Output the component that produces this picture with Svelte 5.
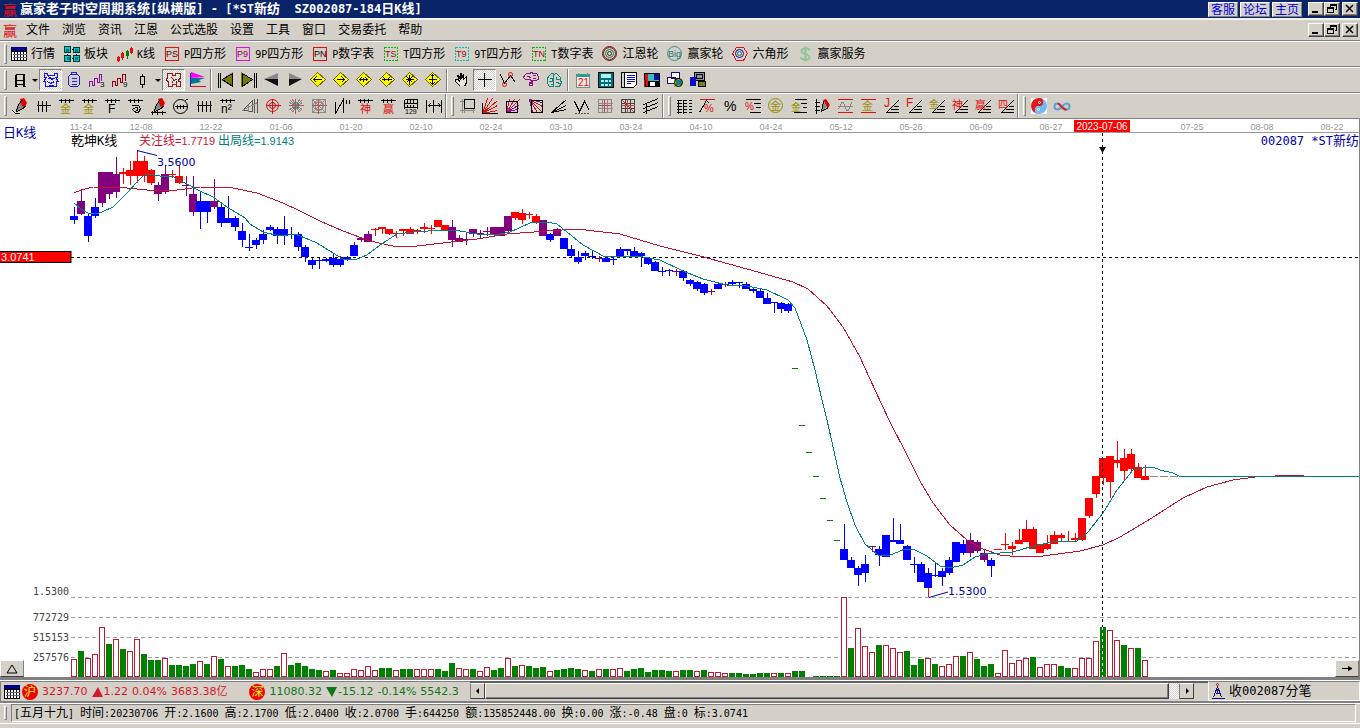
<script lang="ts">
	type Part = [string, string, string, number?, number?, number?];

	const menus = ['文件', '浏览', '资讯', '江恩', '公式选股', '设置', '工具', '窗口', '交易委托', '帮助'];

	const views = [
		['grid', '行情'], ['blocks', '板块'], ['kline', 'K线'], ['PS', 'P四方形'], ['P9', '9P四方形'],
		['PN', 'P数字表'], ['TS', 'T四方形'], ['T9', '9T四方形'], ['TN', 'T数字表'], ['wheel', '江恩轮'],
		['big', '赢家轮'], ['hex', '六角形'], ['dollar', '赢家服务']
	];

	const tools = [
		'day', 'v', '!cloud', 'clip', 'wave3', 'wave9', 'candle', 'v', '!puzzle', 'flag', '|',
		'first', 'last', 'prev', 'next', 'dLeft', 'dRight', 'dWide', 'dIn', 'dStar', 'dUp', '|',
		'hand', '!cross', 'zig', 'brain1', 'brain2', '|',
		'cal', 'calc', 'note', 'disk', 'net', 'pc'
	];

	const bands = [
		['pen', 'ticks3', 'gold', 'gold', 'combF', 'spiral', 'penRule', 'circRule', 'ticks4', 'n2', 'tri', 'target', 'burst', 'web', 'quote', 'shen', 'ying', 'ruler', 'span'],
		['box', 'fan', 'fanBox', 'fanBox2', 'rays', 'vee', 'mesh', 'mesh2', 'para'],
		['levels', 'pctTop', 'pct', 'pctBars', 'goldRing', 'goldBars', 'penBar', 'sine', 'goldLine', 'rJ', 'rF', 'rGold', 'rShen', 'rYing', 'rSi'],
		['taiji', 'inf']
	];

	const K = '#000', R = '#e01010', D = '#8a8a8a', O = '#98900c';
	const comb: Part = ['s', K, 'M0 2h15M3 0v4M7 0v4M11 0v4'];
	const slope: Part = ['s', K, 'M3 14L15 2M2 14h13M7 11h8M10 8h5'];
	const dia: Part = ['f', '#ffff00', 'M7 0L15 7L8 15L0 8Z'];
	const diaEdge: Part = ['s', '#6b6400', 'M7 0L15 7L7 14L0 7Z'];
	const penBody: Part[] = [
		['f', '#888', 'M8 3L13 7L9 12L4 13L5 9Z'],
		['f', '#e00000', 'M8 1L12 0L15 5L13 9L10 8Z'],
		['s', K, 'M9 2L5 8L4 13L9 11L14 7']
	];

	const icons: Record<string, Part[]> = {
		grid: [['f', '#fff', 'M0 1h16v13H0Z'], ['f', '#000090', 'M0 1h16v4H0Z'], ['s', K, 'M0 1v13h15v-13M0 5h15M3 5v9M6 5v9M9 5v9M12 5v9'], ['s', '#667', 'M1 8h14M1 11h14']],
		blocks: [['f', '#00c8c8', 'M0 0h7v7H0ZM9 1h6v6H9ZM0 9h7v7H0ZM9 9h7v7H9Z'], ['s', '#003838', 'M0 0h6v6H0ZM9 1h6v5H9ZM0 9h6v6H0ZM9 9h6v6H9Z'], ['f', '#007878', 'M2 3h3v3H2ZM11 3h3v3h-3ZM3 11h3v3H3ZM11 11h3v3h-3Z'], ['s', K, 'M7 3h2M3 7v2M12 7v2M7 12h2']],
		kline: [['s', R, 'M1 9v6M0 11h2v3H0ZM5 5v8M4 7h2v4H4ZM14 0v7M13 2h2v4h-2Z'], ['s', '#008000', 'M10 3v9M9 5h2v4H9Z']],
		PS: [['s', R, 'M1 1h13v13H1Z'], ['t', '#600', 'PS', 2, 11, 9]],
		P9: [['s', '#e010e0', 'M1 1h13v13H1Z'], ['t', '#a00060', 'P9', 2, 11, 9]],
		PN: [['s', R, 'M1 1h13v13H1Z'], ['t', '#300', 'PN', 2, 11, 9]],
		TS: [['d', '#00c000', 'M1 1h13v13H1Z'], ['t', '#901010', 'TS', 2, 11, 9]],
		T9: [['d', '#00c0c0', 'M1 1h13v13H1Z'], ['t', '#901010', 'T9', 2, 11, 9]],
		TN: [['d', '#00c000', 'M1 1h13v13H1Z'], ['t', '#901010', 'TN', 2, 11, 9]],
		wheel: [['c', '#701010', '', 7, 7, 7], ['c', '#802020', '', 7, 7, 6], ['c', '#208040', '', 7, 7, 4], ['c', '#333', '', 7, 7, 2]],
		big: [['c', '#4a8f8a', '', 7, 7, 7], ['t', '#207878', 'Big', 1, 11, 9]],
		hex: [['s', R, 'M4 1h7l4 6l-4 7H4L0 7Z'], ['c', '#1010c0', '', 7, 7, 4], ['c', '#208040', '', 7, 7, 2]],
		dollar: [['b', '#8fc49a', 'M12 4C11 1 4 1 4 5C4 8 12 7 12 11C12 14 5 14 3 11M8 0v15']],
		day: [['s', K, 'M3 2h9v12M4 2v12M3 14V2M3 8h9M11 2v12M3 12h9M2 14h3M10 14h3']],
		cloud: [['s', '#1010ff', 'M1 1h3v2h7V1h3v4h-2l3 4h-2v5H2V9H0l3-4H1ZM4 6h7M5 4l5 4M4 9l3 2 4-2M5 13h5']],
		clip: [['s', '#2020e0', 'M4 2h7l2 2v8l-2 2H4l-2-2V4ZM5 2V0h5v2M5 6h5M5 9h5M5 12h5']],
		wave3: [['s', '#8a10a0', 'M0 14V9h3v4h2V6h3v4h2V2h2v6'], ['t', K, '3', 11, 15, 8]],
		wave9: [['s', '#900010', 'M0 14V9h3v4h2V6h3v4h2V2h3v6'], ['t', K, '9', 11, 15, 8]],
		candle: [['s', K, 'M7 1v3M7 12v3M5 4h4v8H5Z']],
		puzzle: [['s', '#a01010', 'M1 1h5v2h3V1h5v5l-2 1v2h2v5h-4v-2H6v2H2V9l-2-1V6h1ZM5 5l3 3l3-2M5 11l2-3M10 8v3']],
		flag: [['f', '#ff00ff', 'M2 0L16 5L2 6Z'], ['f', '#007890', 'M2 6L16 6L10 8L12 10L2 12Z'], ['s', '#2020a0', 'M1 0v14'], ['s', R, 'M1 14h15']],
		first: [['f', '#777a00', 'M15 0v15L3 8Z'], ['s', K, 'M0 0v15M2 0v15M14 1v13L4 7Z']],
		last: [['f', '#777a00', 'M0 0v15L12 8Z'], ['s', K, 'M13 0v15M15 0v15M1 1v13L11 7Z']],
		prev: [['f', '#111', 'M0 7h14v7Z'], ['f', '#888', 'M0 7L14 1V7Z']],
		next: [['f', '#111', 'M15 7H2v7Z'], ['f', '#888', 'M15 7L2 1V7Z']],
		dLeft: [dia, diaEdge, ['s', K, 'M3 7h8M6 4L3 7l3 3']],
		dRight: [dia, diaEdge, ['s', K, 'M3 7h8M8 4l3 3l-3 3']],
		dWide: [dia, diaEdge, ['s', K, 'M3 7h8M5 5L3 7l2 2M9 5l2 2l-2 2M7 5v4']],
		dIn: [dia, diaEdge, ['s', K, 'M2 7h10M4 5l2 2l-2 2M10 5L8 7l2 2']],
		dStar: [dia, diaEdge, ['s', K, 'M7 2v10M3 7h8M4 4l6 6M10 4l-6 6']],
		dUp: [dia, diaEdge, ['s', K, 'M7 2v10M3 7h8M5 4l2-2l2 2M5 10l2 2l2-2']],
		hand: [['f', '#e8e6e0', 'M5 5h7l2 2l-3 7H6L2 9Z'], ['s', K, 'M6 14L1 9V7h2l2 2L3 3h1l2 4V1h1v5l2-4v5l3-3v6l-2 4']],
		cross: [['s', K, 'M7 0v14M0 7h14']],
		zig: [['s', K, 'M0 2L4 11L10 3L15 10'], ['c', R, '', 4, 12, 2], ['c', R, '', 10, 2, 2]],
		brain1: [['s', '#90108a', 'M1 3l2-2h3l2-1l2 1h3l2 3v3l-3 1h-3v5H6v-3h2V8L6 7H2L0 5ZM3 4h3l1 2M9 3h3M9 6h3M6 11h3']],
		brain2: [['s', '#108a80', 'M2 4l3-3h2v13H3l-2-3V6ZM7 2l3-1l4 4v3l1 2l-2 4H8M3 6h3v3H2M10 4v3h3M9 10h3l1 2M4 12h2']],
		cal: [['f', '#f4e8e4', 'M1 4h14v12H1Z'], ['f', '#20a090', 'M1 2h14v3H1Z'], ['s', '#888', 'M1 3v12h13V3M3 0v3M12 0v3'], ['t', R, '21', 3, 14, 10]],
		calc: [['f', '#007080', 'M0 0h16v16H0Z'], ['s', K, 'M0 0h15v15H0Z'], ['f', '#b0f0f0', 'M3 2h10v4H3ZM3 8h3v2H3ZM7 8h3v2H7ZM11 8h2v2h-2ZM3 12h3v2H3ZM7 12h3v2H7ZM11 12h2v2h-2Z']],
		note: [['f', '#fff', 'M3 1h12v14H3Z'], ['s', K, 'M0 0h15v12l-3 3H0ZM3 0v15'], ['s', '#1010c0', 'M5 3h8M5 5h8M5 7h8M5 9h8M5 11h4']],
		disk: [['f', R, 'M0 1h4v14H0Z'], ['f', '#30c0c0', 'M4 1h12v8H4Z'], ['f', '#1010a0', 'M10 2h6v6h-6Z'], ['f', K, 'M4 9h11v6H4Z'], ['f', '#fff', 'M6 10h5v4H6Z'], ['s', K, 'M0 1h15v13H1Z']],
		net: [['f', '#fff', 'M4 0h9v7H4ZM0 5h8v7H0Z'], ['s', '#101080', 'M4 0h8v6H4ZM0 5h8v6H0Z'], ['f', '#c0b020', 'M7 7h7v8H7Z'], ['f', '#108080', 'M9 8h6v5H9Z'], ['c', K, '', 11, 10, 4]],
		pc: [['f', '#9090b0', 'M4 0h10v9H4Z'], ['s', K, 'M4 0h10v8H4ZM6 2h6v4H6Z'], ['f', '#1010c0', 'M0 5h6v9H0Z'], ['f', '#808020', 'M8 9h7v5H8Z'], ['s', K, 'M8 9h7v5H8Z']],
		pen: [...penBody, ['s', K, 'M0 12l3 3h4']],
		ticks3: [['s', K, 'M1 7h14M3 2v11M7 2v11M11 2v11']],
		gold: [comb, ['t', O, '金', 2, 15, 11]],
		combF: [comb, ['t', K, 'F', 4, 15, 12]],
		spiral: [comb, ['s', K, 'M4 7h7l2 3l-2 4H7M8 9l-3 2l2 2l3-1V9Z']],
		penRule: [...penBody, ['s', K, 'M0 14h15M2 12v4M7 12v4M12 12v4']],
		circRule: [['c', K, '', 7, 8, 7], ['s', K, 'M1 8h13M4 6v4M7 6v4M10 6v4M12 2l3-2']],
		ticks4: [['s', K, 'M0 7h15M2 2v11M6 2v11M10 2v11M14 2v11']],
		n2: [comb, ['t', K, 'n²', 2, 15, 12]],
		tri: [['s', '#555', 'M0 12L10 2V13ZM12 0v14M15 0v14'], ['s', D, 'M6 6v7M0 12l15-8']],
		target: [['c', R, '', 7, 7, 6], ['c', '#802020', '', 7, 7, 3], ['s', R, 'M7 0v15M0 7h15']],
		burst: [['s', D, 'M2 2l11 11M13 2L2 13M4 1l7 13M1 4l13 7M11 1L4 14M14 4L1 11'], ['s', '#c05050', 'M7 0v15M0 7h15'], ['c', '#308070', '', 7, 7, 3]],
		web: [['s', D, 'M1 1h13v13H1ZM4 4h7v7H4ZM1 1l13 13M14 1L1 14'], ['s', '#c05050', 'M7 0v15M0 7h15'], ['c', D, '', 7, 7, 5]],
		quote: [['s', K, 'M1 3v12L9 1v13M12 1v4M15 1v4']],
		shen: [comb, ['t', R, '神', 3, 15, 11]],
		ying: [comb, ['t', R, '赢', 3, 15, 11]],
		ruler: [['s', K, 'M1 1v9M1 1h13v9M1 5h13M4 1v3M7 1v3M10 1v3M1 9h13M4 6v3M7 6v3M10 6v3'], ['t', K, '129', 2, 16, 7]],
		span: [['s', K, 'M0 1v13M7 1v13M15 1v13M2 7h12M4 5L2 7l2 2M12 5l2 2l-2 2']],
		box: [['s', D, 'M3 0v14M0 12h15M0 3h4M5 10v4M14 10v4'], ['s', K, 'M5 1h10v9H5Z']],
		fan: [['s', R, 'M0 15L15 2M0 15L10 0M0 15L5 0M0 15L15 7M0 15L15 12'], ['s', K, 'M0 4v11h15']],
		fanBox: [['s', '#c02050', 'M1 14L14 1M1 14L9 1M1 14L4 1'], ['s', '#8a10a0', 'M1 14L14 6M1 14L14 10'], ['s', K, 'M1 3h11v11H1Z']],
		fanBox2: [['s', '#c02030', 'M1 1L14 14M1 1L9 14M1 1L14 8'], ['s', '#6020a0', 'M1 1L4 14M1 1L14 4'], ['s', K, 'M3 2h11v12H3Z']],
		rays: [['s', K, 'M0 14L15 1M0 14L15 7M0 14L15 11M0 14l7-6']],
		vee: [['s', K, 'M0 3L5 13L10 3L15 12'], ['d', '#555', 'M0 15h15']],
		mesh: [['s', D, 'M1 1h13v13H1ZM1 5h14M1 10h14M5 1v13M10 1v13'], ['s', '#c04848', 'M1 7h13M7 1v13']],
		mesh2: [['s', '#444', 'M1 1h13v13H1ZM1 5h13M1 10h13M5 1v13M10 1v13'], ['s', '#c04848', 'M1 1l13 13M7 1v13M1 7h13']],
		para: [['s', K, 'M0 6L15 0M0 10L15 4M0 14L15 8M3 5v10']],
		levels: [['s', K, 'M2 1v14M7 1v14M0 2h5M0 5h5M0 8h5M0 11h5M0 14h5M7 2h3M7 5h3M7 8h3M7 11h3M7 14h3M12 2h3M12 5h3M12 8h3M12 11h3M12 14h3']],
		pctTop: [['s', R, 'M0 1h15'], ['s', K, 'M0 14L7 2l3 3'], ['t', R, '%', 5, 14, 11]],
		pct: [['t', K, '%', 2, 13, 14]],
		pctBars: [['s', K, 'M0 1h15M8 5h7M10 9h5M4 14h11'], ['t', R, '%', 0, 12, 10]],
		goldRing: [['c', O, '', 7, 7, 7], ['t', O, '金', 2, 12, 11]],
		goldBars: [['s', K, 'M3 1h12M9 5h6M11 9h4M2 14h13'], ['t', O, '金', 0, 13, 10]],
		penBar: [['s', K, 'M2 0v15M0 4h5M0 8h5M0 12h5'], ['f', '#888', 'M9 4l5 4l-7 6Z'], ['f', '#e00000', 'M9 2l3-1l4 6l-2 3Z'], ['s', K, 'M9 3L7 13l7-4']],
		sine: [['s', R, 'M0 1h15M0 14h15'], ['s', D, 'M0 8h15M1 11L4 4h2l3 8h2l3-8']],
		goldLine: [['s', R, 'M0 1h15M0 14h15'], ['t', O, '金', 2, 12, 11]],
		rJ: [slope, ['t', R, 'J', 1, 9, 12]],
		rF: [slope, ['t', R, 'F', 0, 9, 12]],
		rGold: [slope, ['t', O, '金', 0, 10, 10]],
		rShen: [slope, ['t', R, '神', 0, 11, 11]],
		rYing: [slope, ['t', R, '赢', 0, 11, 11]],
		rSi: [slope, ['t', R, '四', 0, 10, 10]],
		taiji: [['f', '#fff', 'M0 0h16v16H0Z'], ['f', '#70b8f8', 'M8 0A8 8 0 0 1 8 16Z'], ['f', '#e01818', 'M8 0A8 8 0 0 0 8 16A4 4 0 0 1 8 8A4 4 0 0 0 8 0Z'], ['f', '#e01818', 'M8 0a4 4 0 0 1 0 8Z'], ['f', '#70b8f8', 'M8 8a4 4 0 0 0 0 8Z'], ['c', '#fff', '', 8, 4, 1], ['c', '#fff', '', 7, 11, 1]],
		inf: [['b', '#60a0d0', 'M7 8C5 4 0 4 0 8C0 12 5 12 7 8'], ['b', '#60a0d0', 'M8 8C10 12 15 12 15 8C15 4 10 4 8 8'], ['b', '#d02020', 'M3 5C6 5 8 12 12 11']],
		tower: [['s', '#101080', 'M7 3L3 14M7 3L11 14M5 10h5M5 7h4M1 15h13M7 5v5'], ['c', R, '', 7, 1, 1]]
	};

	// dates under the toolbar, by the x of their middle
	const dates: [string, number][] = [
		['11-24', 81], ['12-08', 141], ['12-22', 211], ['01-06', 281], ['01-20', 351], ['02-10', 421],
		['02-24', 491], ['03-10', 561], ['03-24', 631], ['04-10', 701], ['04-24', 771], ['05-12', 841],
		['05-26', 911], ['06-09', 981], ['06-27', 1051], ['07-25', 1192], ['08-08', 1262], ['08-22', 1332]
	];

	const colours: Record<string, string> = { b: '#0000ff', r: '#ff0000', p: '#800080', g: '#008000' };

	// colour, high, body top, body bottom, low
	const candles = `b 207 216 220 224,p 190 201 214 215,b 213 216 236 242,b 198 207 216 218,p 172 172 203 207,p 172 172 194 199,p 157 174 192 198,r 168 172 174 184,r 161 170 176 185,r 150 161 176 183
r 156 161 176 182,r 169 170 183 185,p 182 185 194 201,p 165 174 192 194,r 170 174 175 178,r 165 176 183 184,p 176 185 186 196,p 176 194 212 216,b 191 201 212 229,b 201 201 212 223
p 179 201 207 209,b 203 207 223 227,b 196 218 223 223,b 216 218 227 231,b 223 231 240 247,b 234 247 248 251,b 238 240 245 249,b 230 234 240 244,b 225 227 230 231,b 227 229 236 244
b 216 229 236 245,b 227 234 235 239,b 232 234 247 251,b 245 247 257 262,b 258 260 265 269,b 258 260 261 269,b 258 259 261 262,b 253 258 265 267,b 256 259 265 267,b 256 257 259 261
b 242 245 256 256,p 237 238 240 242,p 231 234 242 242,r 228 229 230 236,r 227 227 229 234,r 229 229 234 235,r 231 233 234 238,r 229 229 231 236,r 227 229 234 234,r 229 230 231 234
r 223 227 229 233,r 225 228 229 234,r 220 220 227 227,r 225 225 230 230,p 220 227 240 247,p 235 238 242 242,p 233 239 240 245,p 229 229 234 237,p 230 233 234 239,p 227 231 232 236
p 227 227 234 236,p 227 227 236 236,p 216 216 231 232,r 212 212 218 220,r 209 213 220 224,r 212 214 215 219,r 214 216 223 224,p 220 220 236 236,b 233 234 240 242,p 228 229 236 236
b 238 238 249 249,b 245 249 256 257,b 251 257 262 264,b 251 253 256 260,b 250 256 257 259,p 256 258 259 262,b 257 258 262 262,b 257 259 260 265,b 247 249 256 256,b 249 249 251 255
b 247 251 256 257,b 252 253 256 267,b 257 258 264 265,b 261 262 271 271,b 267 271 272 276,b 269 270 271 276,p 269 271 272 276,b 270 271 278 281,b 279 280 284 286,b 281 282 289 291
b 283 284 293 295,p 289 291 292 295,b 283 284 289 289,p 282 284 285 287,b 280 282 284 285,b 282 282 283 288,b 282 284 289 289,b 288 289 291 293,b 289 291 298 298,b 293 298 304 304
b 302 302 303 313,b 302 303 309 313,b 303 304 311 313,g 368 368 369 369,g 425 425 426 426,g 452 452 453 453,g 476 476 477 477,g 498 498 499 499,g 520 520 521 521,g 540 540 541 541
b 524 549 560 560,b 557 560 568 568,b 566 568 575 586,b 555 564 573 582,p 546 546 547 552,b 546 549 555 566,b 535 535 557 557,b 518 540 542 542,b 524 540 544 544,b 545 546 560 560
b 557 564 565 573,b 562 564 582 582,b 568 573 588 597,b 563 575 576 577,b 568 571 577 586,b 557 560 573 575,b 542 542 562 562,b 540 544 553 555,p 533 540 553 557,p 540 542 551 553
p 549 553 560 562,b 558 560 566 577,r 549 549 550 550,r 533 544 545 550,r 542 546 549 555,r 529 540 544 544,r 520 529 542 542,r 527 529 549 549,r 544 544 553 553,r 535 544 549 550
r 531 535 544 544,r 533 535 538 542,r 531 541 542 542,r 533 538 540 542,r 518 518 540 541,r 498 498 516 518,r 476 476 494 498,r 458 458 478 485,r 456 456 482 498,r 441 460 463 468
r 449 458 471 480,r 449 454 469 473,r 463 467 478 478,r 465 476 480 480`
		.split(/[,\n]/)
		.map((row, i) => {
			const [c, ...v] = row.trim().split(' ');
			const [high, top, bottom, low] = v.map(Number);
			return { x: 74 + 7 * i, fill: colours[c], high, top, bottom, low };
		});

	// r is a hollow rising bar, g a filled falling one; the number is its height
	const volumes = `r18 g26 r19 r23 r50 g33 r38 g28 r26 r38 g23 g17 g17 r19 g12 g12 g11 g13 r16 g13
r21 g18 r11 g11 g12 g8 r5 r8 r8 g11 r24 g12 g14 g11 g8 g7 r6 g7 r4 r4
r8 r7 r11 r7 g9 g9 r7 g8 g8 r8 r8 r8 g8 g6 g14 r9 r8 g8 r6 r10
g7 g9 r19 g11 r12 g11 g9 g10 r6 g7 g8 g9 g8 r7 g6 r8 g8 r8 r9 g6
g8 g9 g5 g7 g7 g6 r6 g7 g7 r6 g7 r5 r5 r4 g4 g4 g3 g3 g4 g4
r4 g4 r4 g6 g6 g0 g1 g1 g1 g1 r80 g29 r49 r31 r25 g32 r32 r29 r25 g26
g12 g18 r19 g13 r11 r13 r21 g21 r25 g18 g11 g13 r4 r27 r14 r17 r19 g20 r10 r13
r13 g11 g9 r9 r19 r19 r36 g50 r47 r37 g32 r29 g29 r17`
		.split(/\s+/)
		.map((v, i) => ({ x: 71 + 7 * i, up: v[0] === 'r', h: Number(v.slice(1)) }));

	const shortLine = '74,203 81,209 88,213 97,214 104,211 113,207 127,193 137,182 144,175 148,174 160,176 172,176 177,179 187,184 200,191 213,197 227,207 245,218 250,224 263,232 280,236 295,234 310,240 317,243 333,253 343,259 355,260 367,255 380,245 397,234 413,232 443,230 460,231 477,234 500,234 510,232 530,223 547,222 557,224 567,232 583,245 605,257 620,256 643,257 660,260 683,271 703,279 727,285 747,286 767,290 788,300 795,308 807,340 815,370 822,400 827,420 840,478 847,502 855,525 865,544 878,555 888,556 905,549 913,549 927,556 940,566 950,568 963,565 975,557 987,554 1013,552 1030,547 1057,541 1077,541 1088,532 1103,513 1117,490 1133,470 1143,468 1153,467 1160,470 1173,473 1179,476';
	const longLine = '74,193 81,190 93,187 127,188 147,190 177,190 200,187 233,188 257,193 283,203 300,211 320,221 343,231 370,241 393,246 417,246 443,243 477,239 507,234 547,231 577,229 603,232 620,234 660,246 700,256 747,269 793,282 808,289 827,306 843,327 860,357 875,390 889,420 907,455 920,481 933,503 950,525 967,540 983,549 1000,555 1020,557 1043,556 1080,551 1103,545 1120,537 1147,521 1183,498 1207,487 1233,480 1255,477 1275,476 1275,475 1303,475 1303,476';

	const levels: [string, number][] = [['1.5300', 597], ['772729', 617], ['515153', 637], ['257576', 657]];

	const quote = ['[五月十九]', '时间:20230706', '开:2.1600', '高:2.1700', '低:2.0400', '收:2.0700', '手:644250', '额:135852448.00', '换:0.00', '涨:-0.48', '盘:0', '标:3.0741'];

	// Chinese and Latin runs are set in different faces
	function runs(text: string) {
		return text.match(/[\x20-\x7e]+|[^\x20-\x7e]+/g) ?? [];
	}
	const isLatin = (run: string) => run.charCodeAt(0) < 127;
</script>

{#snippet mixed(text: string)}{#each runs(text) as run}<span class:lat={isLatin(run)}>{run}</span>{/each}{/snippet}

{#snippet icon(name: string)}
	<svg class="icon" width="16" height="16" aria-hidden="true">
		{#each icons[name] as [kind, colour, d, x, y, size]}
			{#if kind === 't'}
				<text {x} {y} fill={colour} font-size={size}>{d}</text>
			{:else if kind === 'c'}
				<circle cx={x! + 0.5} cy={y! + 0.5} r={size} fill="none" stroke={colour} />
			{:else if kind === 'f'}
				<path {d} fill={colour} />
			{:else}
				<path
					{d}
					transform="translate(.5 .5)"
					fill="none"
					stroke={colour}
					stroke-width={kind === 'b' ? 2 : 1}
					stroke-dasharray={kind === 'd' ? '2 1' : undefined}
					shape-rendering={kind === 'b' ? 'auto' : 'crispEdges'}
				/>
			{/if}
		{/each}
	</svg>
{/snippet}

{#snippet windowButtons()}
	<div class="win">
		<button aria-label="最小化"><svg width="12" height="10"><path d="M2 7h6v2H2z" /></svg></button>
		<button aria-label="还原"><svg width="12" height="10"><path d="M4 0h7v6H9V5h1V2H5v1H4zM1 3h7v6H1zM2 5v3h5V5z" fill-rule="evenodd" /></svg></button>
		<button class="close" aria-label="关闭"><svg width="12" height="10"><path d="M2 1l7 7M9 1L2 8" stroke="#000" stroke-width="1.500" /></svg></button>
	</div>
{/snippet}

<div class="app">
	<header class="title">
		<span class="logo">赢</span>
		<h1>{@render mixed('赢家老子时空周期系统[纵横版] - [*ST新纺  SZ002087-184日K线]')}</h1>
		<nav>
			<a href="#service">客服</a>
			<a href="#forum">论坛</a>
			<a href="#home">主页</a>
		</nav>
		{@render windowButtons()}
	</header>

	<div class="menubar">
		<span class="logo">赢</span>
		{#each menus as menu}
			<button>{menu}</button>
		{/each}
		{@render windowButtons()}
	</div>

	<div class="toolbar views">
		<i class="grip"></i>
		{#each views as [name, label]}
			<button>{@render icon(name)}<span>{@render mixed(label)}</span></button>
		{/each}
	</div>

	<div class="toolbar">
		<i class="grip"></i>
		{#each tools as tool}
			{#if tool === '|'}
				<i class="sep"></i>
			{:else if tool === 'v'}
				<button class="drop" aria-label="展开"></button>
			{:else}
				<button class="tool" class:pressed={tool[0] === '!'} aria-label={tool.replace('!', '')}>
					{@render icon(tool.replace('!', ''))}
				</button>
			{/if}
		{/each}
	</div>

	<div class="toolbar">
		{#each bands as band}
			<div class="band">
				<i class="grip"></i>
				{#each band as tool}
					<button class="tool" aria-label={tool}>{@render icon(tool)}</button>
				{/each}
			</div>
		{/each}
	</div>

	<main class="chart">
		<svg class="plot" width="100%" height="558">
			<!-- y counts from the top of the window -->
			<g transform="translate(0 -119)">
				<g class="dates">
					{#each dates as [date, x]}
						<text {x} y="130">{date}</text>
					{/each}
				</g>
				<path class="axis" d="M71 132.500H4000" />

				{#each levels as [label, y]}
					<text class="level" x="69" y={y - 2 + (y > 600 ? 6 : 0)}>{label}</text>
					<path class="guide" d="M71 {y}.5H4000" />
				{/each}

				<g shape-rendering="crispEdges">
					{#each volumes as bar}
						{#if bar.up}
							<rect x={bar.x + 0.5} y={677.5 - bar.h} width="5" height={bar.h - 1} fill="#fff" stroke="#c01830" />
						{:else}
							<rect x={bar.x} y={677 - bar.h} width="6" height={bar.h} fill="#008000" />
						{/if}
					{/each}
					<path class="cross" d="M71 257.500H4000" />
					{#each candles as c}
						{#if c.high < c.low}
							<rect x={c.x} y={c.high} width="1" height={c.low - c.high} fill={c.fill} />
						{/if}
						<rect x={c.x - (c.fill === '#008000' ? 3 : 4)} y={c.top} width={c.fill === '#008000' ? 6 : 8} height={c.bottom - c.top} fill={c.fill} />
					{/each}
					<path d="M928.500 588V597" stroke="#ff0000" />
					<polyline points={longLine} fill="none" stroke="#c8102c" />
					<polyline points={shortLine} fill="none" stroke="#008080" />
					<path d="M1150 476.500H1179" stroke="#a08080" stroke-dasharray="8 2" />
					<path d="M1179 476.500H4000" stroke="#008080" />
					<path d="M1275 475.500H1303" stroke="#c8102c" />
					<path class="cross" d="M1102.500 133V627" />
					<path class="cross light" d="M1102.500 627V677" />
				</g>
				<path d="M1099 147h7l-3 5h-1z" />

				<rect x="1074" y="120" width="56" height="12" fill="#ff0000" />
				<text class="date-now" x="1102" y="130">2023-07-06</text>
				<rect x="-1" y="251.500" width="72" height="11" fill="#ff0000" stroke="#000" />
				<text class="price-now" x="1" y="261">3.0741</text>

				<text class="name blue" x="3" y="137">日<tspan class="svg-lat">K</tspan>线</text>
				<text class="name" x="71" y="145">乾坤<tspan class="svg-lat">K</tspan>线</text>
				<text class="legend" x="139" y="145" fill="#d01030">关注线<tspan>=1.7719</tspan></text>
				<text class="legend" x="218" y="145" fill="#008080">出局线<tspan>=1.9143</tspan></text>
				<path d="M137 150.500L157 155.500M929 597.500L948 592" stroke="#0000a8" fill="none" />
				<text class="mark" x="157" y="166">3.5600</text>
				<text class="mark" x="948" y="595">1.5300</text>
			</g>
		</svg>
		<div class="stock">{@render mixed('002087 *ST新纺')}</div>
		<button class="corner left" aria-label="展开指标"><svg width="12" height="10"><path d="M6 1L11 9H1Z" fill="none" stroke="#000" /></svg></button>
		<button class="corner right" aria-label="右移"><svg width="12" height="10"><path d="M1 4h10v1H1zM7 2l4 2v1l-4 2z" /></svg></button>
	</main>

	<div class="market">
		<div class="indexes">
			{@render icon('grid')}
			<b class="badge">沪</b>
			<div class="index up"><span>3237.70</span><span class="change"><svg width="11" height="10"><path d="M6 0L11 10H0z" /></svg>1.22</span><span>0.04%</span><span>3683.38亿</span></div>
			<b class="badge">深</b>
			<div class="index down"><span>11080.32</span><span class="change"><svg width="11" height="10"><path d="M0 0h11L6 10z" /></svg>-15.12</span><span>-0.14%</span><span>5542.3</span></div>
		</div>
		<div class="scroll">
			<button aria-label="向左"><svg width="8" height="8"><path d="M5 1v6L2 4z" /></svg></button>
			<div class="thumb"></div>
			<div class="track"></div>
			<button aria-label="向右"><svg width="8" height="8"><path d="M3 1v6l3-3z" /></svg></button>
		</div>
		<div class="feed">{@render icon('tower')}<span>{@render mixed('收002087分笔')}</span></div>
	</div>

	<footer>
		<i class="grip"></i>
		<div class="quote">
			{#each quote as field}
				<span>{@render mixed(field)}</span>
			{/each}
		</div>
	</footer>
</div>

<style>
	:global(body) {
		margin: 0;
		background: #d4d0c8;
	}
	.app {
		font-family: "Liberation Sans", "Noto Sans CJK SC", sans-serif;
		font-size: 12px;
		line-height: 16px;
		color: #000;
		background: #d4d0c8;
		overflow: hidden;
	}
	button {
		font: inherit;
		color: inherit;
		border: 0;
		padding: 0;
		background: none;
		display: flex;
		align-items: center;
		justify-content: center;
		white-space: nowrap;
	}
	svg {
		display: block;
		flex: none;
	}
	.icon {
		overflow: visible;
	}
	.lat {
		font-family: "DejaVu Sans Mono", monospace;
		font-size: 10px;
		white-space: pre;
	}

	.title {
		display: flex;
		align-items: center;
		height: 18px;
		background: #0a246a;
		color: #fff;
	}
	.logo {
		width: 14px;
		margin: 0 3px;
		font-family: "Noto Sans CJK SC", sans-serif;
		font-size: 14px;
		color: #e01020;
	}
	h1 {
		margin: 0;
		font-size: 13px;
		line-height: 18px;
		white-space: nowrap;
	}
	h1 .lat,
	.stock .lat,
	.feed .lat {
		font-size: 12px;
	}
	nav {
		display: flex;
		gap: 2px;
		margin-left: auto;
		margin-right: 6px;
	}
	nav a {
		box-sizing: border-box;
		width: 30px;
		height: 15px;
		line-height: 14px;
		font-size: 12px;
		text-align: center;
		text-decoration: none;
		color: #0000e0;
		background: #d4d0c8;
		border: 1px solid;
		border-color: #fff #808080 #808080 #fff;
	}
	.win {
		display: flex;
		margin-right: 2px;
	}
	.win button {
		box-sizing: border-box;
		width: 16px;
		height: 14px;
		background: #d4d0c8;
		border: 1px solid;
		border-color: #fff #404040 #404040 #fff;
		box-shadow: inset -1px -1px #808080;
	}
	.win .close {
		margin-left: 2px;
	}

	.menubar {
		box-sizing: border-box;
		display: flex;
		align-items: center;
		height: 23px;
		border-top: 2px solid #f4f2ee;
		border-bottom: 1px solid #808080;
	}
	.menubar button {
		margin-right: 12px;
	}
	.menubar .logo {
		margin-right: 9px;
	}
	.menubar .win {
		margin-left: auto;
	}
	.menubar .win button {
		margin-right: 0;
	}

	.toolbar {
		box-sizing: border-box;
		display: flex;
		align-items: center;
		height: 26px;
		padding-left: 4px;
		border-top: 1px solid #fff;
		border-bottom: 1px solid #808080;
	}
	.toolbar:has(.band) {
		padding-left: 0;
	}
	.grip {
		box-sizing: border-box;
		flex: none;
		width: 3px;
		height: 20px;
		margin-right: 1px;
		border: 1px solid;
		border-color: #fff #808080 #808080 #fff;
	}
	.views {
		gap: 9px;
	}
	.views .grip {
		margin-right: -5px;
	}
	.views button {
		gap: 4px;
	}
	.tool {
		box-sizing: border-box;
		flex: none;
		width: 23px;
		height: 22px;
	}
	.pressed {
		border: 1px solid;
		border-color: #808080 #fff #fff #808080;
		background: repeating-conic-gradient(#fff 0 25%, #d4d0c8 0 50%) 0 0 / 2px 2px;
	}
	.drop {
		width: 8px;
		height: 22px;
	}
	.drop::before {
		content: "";
		border: 3px solid transparent;
		border-top-color: #000;
		border-bottom: 0;
	}
	.sep {
		box-sizing: border-box;
		width: 2px;
		height: 22px;
		margin: 0 2px;
		border-left: 1px solid #808080;
		border-right: 1px solid #fff;
	}
	.band {
		display: flex;
		align-items: center;
		height: 24px;
		padding-left: 4px;
		border-right: 1px solid #808080;
		box-shadow: 1px 0 #fff;
		margin-right: 1px;
	}
	.band:last-child {
		border: 0;
		box-shadow: none;
	}

	.chart {
		position: relative;
		background: #fff;
		border-right: 1px solid #808080;
		border-bottom: 3px solid #808080;
	}
	.plot {
		overflow: hidden;
	}
	.dates text {
		font-size: 9px;
		fill: #999;
		text-anchor: middle;
	}
	.axis {
		stroke: #999;
	}
	.level {
		font-family: "DejaVu Sans Mono", monospace;
		font-size: 10px;
		fill: #444;
		text-anchor: end;
	}
	.guide {
		stroke: #a0a0a0;
		stroke-dasharray: 4 3;
	}
	.cross {
		stroke: #000;
		stroke-dasharray: 3 3;
	}
	.light {
		stroke: #fff;
	}
	.date-now {
		font-size: 10px;
		fill: #fff;
		text-anchor: middle;
	}
	.price-now {
		font-size: 11px;
		fill: #fff;
	}
	.name {
		font-family: "Noto Sans CJK SC", sans-serif;
		font-size: 13px;
	}
	.blue {
		fill: #0000a8;
	}
	.svg-lat {
		font-family: "DejaVu Sans Mono", monospace;
		font-size: 12px;
	}
	.legend {
		font-size: 12px;
	}
	.legend tspan {
		font-size: 11px;
	}
	.mark {
		font-family: "DejaVu Sans", sans-serif;
		font-size: 11px;
		fill: #0000a8;
	}
	.stock {
		position: absolute;
		top: 14px;
		right: 0;
		font-size: 13px;
		color: #0000a8;
	}
	.corner {
		position: absolute;
		bottom: 0;
		width: 24px;
		height: 17px;
		background: #d4d0c8;
		border: 1px solid;
		border-color: #fff #808080 #404040 #fff;
	}
	.left {
		left: 0;
	}
	.right {
		right: 0;
	}

	.market {
		box-sizing: border-box;
		display: flex;
		height: 21px;
		border-top: 1px solid #fff;
	}
	.indexes {
		box-sizing: border-box;
		display: flex;
		align-items: center;
		flex: none;
		width: 470px;
		padding-left: 3px;
		border: 1px solid #808080;
		border-right: 0;
		border-bottom: 0;
	}
	.badge {
		flex: none;
		width: 16px;
		height: 16px;
		margin: 0 4px 0 2px;
		border-radius: 8px;
		background: #f00000;
		color: #ffff00;
		text-align: center;
		font-weight: normal;
		font-size: 12px;
	}
	.index {
		display: flex;
		align-items: center;
		flex: none;
		gap: 4px;
		margin-right: 20px;
		font-family: "DejaVu Sans", "Noto Sans CJK SC", sans-serif;
		font-size: 11px;
	}
	.index:last-child {
		margin-right: 0;
	}
	.change {
		display: flex;
		align-items: center;
		gap: 1px;
	}
	.change svg {
		fill: currentColor;
	}
	.up {
		color: #d81828;
	}
	.down {
		color: #107818;
	}
	.scroll {
		box-sizing: border-box;
		display: flex;
		flex: 1;
		padding: 0 14px 2px 0;
		background: #d4d0c8;
		border-top: 2px solid #606060;
	}
	.scroll button {
		box-sizing: border-box;
		width: 15px;
		background: #d4d0c8;
		border: 1px solid;
		border-color: #fff #404040 #404040 #808080;
	}
	.thumb {
		flex: 1;
		border: 1px solid;
		border-color: #fff #404040 #404040 #fff;
		box-shadow: inset -1px -1px #808080;
	}
	.track {
		width: 10px;
		background: repeating-conic-gradient(#fff 0 25%, #d4d0c8 0 50%) 0 0 / 2px 2px;
	}
	.feed {
		box-sizing: border-box;
		display: flex;
		align-items: center;
		gap: 3px;
		width: 152px;
		padding-left: 1px;
		font-size: 13px;
		border: 1px solid;
		border-color: #808080 #fff #fff #fff;
		white-space: nowrap;
	}

	footer {
		display: flex;
		align-items: center;
		height: 20px;
		padding: 0 4px;
		border-top: 2px solid #808080;
		border-bottom: 1px solid #fff;
		box-shadow: inset 0 1px #fff;
		margin-bottom: 4px;
	}
	footer .grip {
		height: 14px;
		margin-right: 4px;
	}
	.quote {
		box-sizing: border-box;
		display: flex;
		align-items: center;
		flex: 1;
		gap: 6px;
		height: 18px;
		padding-left: 2px;
		border: 1px solid;
		border-color: #808080 #fff #fff #808080;
		white-space: nowrap;
	}
</style>
